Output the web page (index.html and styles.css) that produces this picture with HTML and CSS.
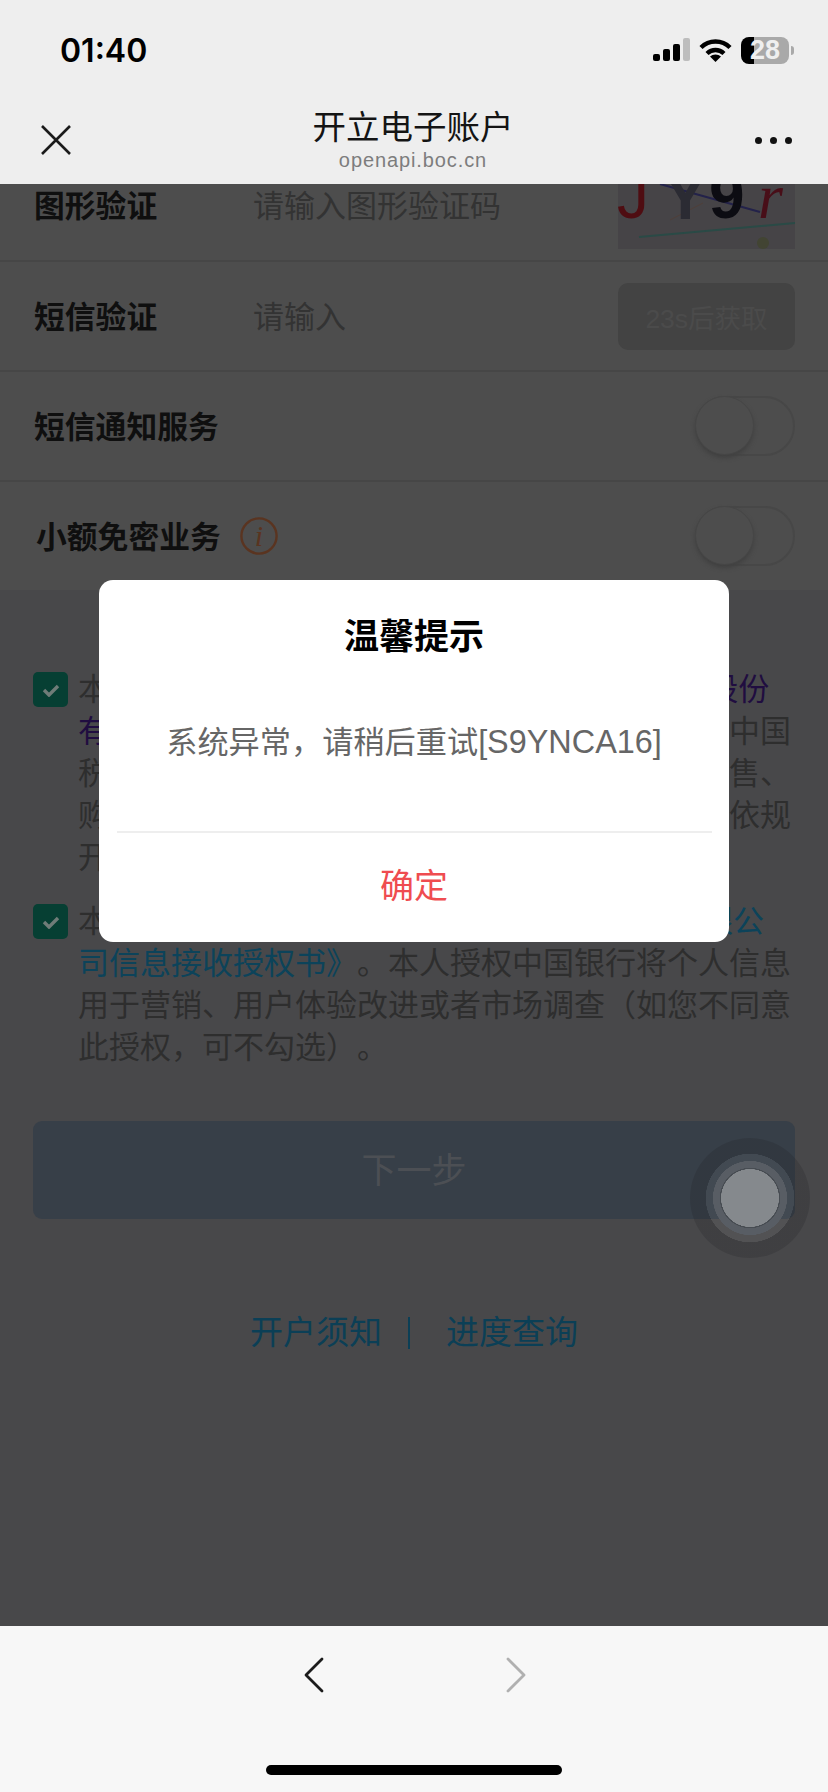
FILE: index.html
```html
<!DOCTYPE html>
<html lang="zh-CN">
<head>
<meta charset="utf-8">
<title>开立电子账户</title>
<link rel="stylesheet" href="styles.css">
</head>
<body>
<div class="app">
  <header class="topbar">
    <div class="status">
      <span class="time">01:40</span>
      <div class="status-icons">
        <svg class="signal" width="37" height="24" viewBox="0 0 37 24"><rect x="0" y="16" width="7" height="7" rx="2"/><rect x="10" y="11" width="7" height="12" rx="2"/><rect x="20" y="6" width="7" height="17" rx="2"/><rect x="30" y="0" width="7" height="23" rx="2" fill="#bdbdbd"/></svg>
        <svg class="wifi" width="33" height="24" viewBox="0 0 33 24"><path d="M2 9.5C10 1.5 23 1.5 31 9.5" fill="none" stroke="#000" stroke-width="4.4"/><path d="M8 15.5C13 10.8 20 10.8 25 15.5" fill="none" stroke="#000" stroke-width="4.4"/><path d="M16.5 24L11 18.6C14 15.9 19 15.9 22 18.6Z"/></svg>
        <div class="battery"><span class="battery-num">28</span></div>
        <span class="battery-nub"></span>
      </div>
    </div>
    <nav class="nav">
      <svg class="close" width="30" height="30" viewBox="0 0 30 30"><path d="M1 1L29 29M29 1L1 29" fill="none" stroke="#1a1a1a" stroke-width="2.6"/></svg>
      <div class="nav-title">
        <div class="nav-name">开立电子账户</div>
        <div class="nav-url">openapi.boc.cn</div>
      </div>
      <div class="dots"><span></span><span></span><span></span></div>
    </nav>
  </header>

  <main class="content">
    <section class="form">
      <div class="row row-first">
        <span class="label">图形验证</span>
        <span class="placeholder">请输入图形验证码</span>
        <svg class="captcha" width="177" height="88" viewBox="0 0 177 88">
          <rect width="177" height="88" fill="#464447"/>
          <path d="M42 23L142 51" stroke="#23224a" stroke-width="2" fill="none"/>
          <path d="M52 59L85 42" stroke="#4f3f39" stroke-width="1" fill="none"/>
          <path d="M21 76L177 62" stroke="#2a4a46" stroke-width="2" fill="none"/>
          <circle cx="145" cy="82" r="6" fill="#424433"/>
          <text class="cap-j" x="-1" y="57">J</text>
          <text class="cap-y" x="46" y="58">Y</text>
          <text class="cap-9" x="91" y="57">9</text>
          <text class="cap-r" x="140" y="57">r</text>
        </svg>
      </div>
      <div class="row">
        <span class="label">短信验证</span>
        <span class="placeholder">请输入</span>
        <span class="sms-btn">23s后获取</span>
      </div>
      <div class="row">
        <span class="label">短信通知服务</span>
        <span class="toggle"><span class="knob"></span></span>
      </div>
      <div class="row row-last">
        <span class="label label-auto">小额免密业务</span>
        <svg class="info" width="38" height="38" viewBox="0 0 38 38"><circle cx="19" cy="19" r="17.6" fill="none" stroke="#5a3420" stroke-width="2.4"/><text class="info-i" x="19" y="29">i</text></svg>
        <span class="toggle"><span class="knob"></span></span>
      </div>
    </section>

    <section class="agreements">
      <div class="agree">
        <span class="check"><svg width="18" height="14" viewBox="0 0 18 14"><path d="M2 7L7 12L16 3" fill="none" stroke="#6f7c78" stroke-width="3.4"/></svg></span>
        <p class="agree-text">本人已阅读同意《账户服务协议》《&#8201;<span class="visited">中国银行股份<br>有限公司</span>电子账户章程及相关服务条款，并知晓中国<br>税收居民身份声明，并同意办理账户开立基金销售、<br>购买理财产品等相关业务，确认所填信息真实并依规<br>开立账户。</p>
      </div>
      <div class="agree">
        <span class="check"><svg width="18" height="14" viewBox="0 0 18 14"><path d="M2 7L7 12L16 3" fill="none" stroke="#6f7c78" stroke-width="3.4"/></svg></span>
        <p class="agree-text">本人已阅读并同意签署<span class="link">《致中国银行及其子中银公<br>司信息接收授权书》</span>。本人授权中国银行将个人信息<br>用于营销、用户体验改进或者市场调查（如您不同意<br>此授权，可不勾选）。</p>
      </div>
    </section>

    <div class="next">下一步</div>

    <div class="links">
      <span>开户须知</span>
      <i class="sep"></i>
      <span>进度查询</span>
    </div>

    <div class="ball"></div>

    <div class="modal">
      <h2 class="modal-title">温馨提示</h2>
      <p class="modal-msg">系统异常，请稍后重试<span class="modal-code">[S9YNCA16]</span></p>
      <div class="modal-line"></div>
      <div class="modal-ok">确定</div>
    </div>
  </main>

  <footer class="bottom">
    <div class="arrows">
      <svg width="20" height="36" viewBox="0 0 20 36"><path d="M18 2L2 18L18 34" fill="none" stroke="#1c1c1c" stroke-width="2.8" stroke-linecap="round" stroke-linejoin="round"/></svg>
      <svg width="20" height="36" viewBox="0 0 20 36"><path d="M2 2L18 18L2 34" fill="none" stroke="#b0b0b0" stroke-width="2.8" stroke-linecap="round" stroke-linejoin="round"/></svg>
    </div>
    <div class="home"></div>
  </footer>
</div>
</body>
</html>
```

FILE: styles.css
```css
* { box-sizing: border-box; }
html, body { margin: 0; padding: 0; }
body {
  font-family: "Liberation Sans", "Noto Sans CJK SC", sans-serif;
  background: #48484a;
  text-spacing-trim: space-all;
}
.app {
  width: 828px;
  height: 1792px;
  display: flex;
  flex-direction: column;
  overflow: hidden;
}

/* top */
.topbar {
  height: 184px;
  flex: none;
  background: #eeeeee;
  position: relative;
  z-index: 2;
}
.status {
  height: 100px;
  display: flex;
  align-items: center;
  justify-content: space-between;
  padding: 0 34px 0 60px;
}
.time {
  font-family: Inter, "Liberation Sans", sans-serif;
  font-size: 32px;
  font-weight: 600;
  color: #000;
}
.status-icons {
  display: flex;
  align-items: center;
}
.signal { margin-right: 8px; }
.wifi { margin-right: 9px; margin-left: 1px; }
.battery {
  width: 48px;
  height: 27px;
  border-radius: 8px;
  background: linear-gradient(to right, #000 13px, #a9a9a9 13px);
  display: flex;
  align-items: center;
  justify-content: center;
}
.battery-num {
  font-size: 27px;
  font-weight: 700;
  color: #efefef;
  line-height: 27px;
}
.battery-nub {
  width: 3px;
  height: 9px;
  margin-left: 2px;
  border-radius: 0 3px 3px 0;
  background: #a9a9a9;
}
.nav {
  height: 84px;
  padding: 0 36px 4px 41px;
  display: flex;
  align-items: center;
  justify-content: space-between;
}
.nav-title { text-align: center; }
.nav-name {
  font-size: 33.5px;
  line-height: 40px;
  color: #141414;
}
.nav-url {
  font-size: 20px;
  line-height: 24px;
  color: #7d7d7d;
  letter-spacing: 0.9px;
}
.dots {
  display: flex;
  gap: 8px;
}
.dots span {
  width: 7px;
  height: 7px;
  border-radius: 50%;
  background: #111;
}

/* content */
.content {
  flex: 1;
  position: relative;
  overflow: hidden;
  background: #48484a;
}
.form {
  margin-top: -34px;
  background: #4d4d4d;
}
.row {
  height: 110px;
  padding: 0 33px 0 34px;
  display: flex;
  align-items: center;
  border-bottom: 2px solid #464646;
  font-size: 31px;
}
.row-first { height: 112px; }
.row-last { height: 108px; border-bottom: 0; }
.label {
  font-weight: 700;
  font-size: 30.8px;
  color: #0f0f0f;
  width: 219px;
  flex: none;
  padding-bottom: 4px;
}
.label-auto { width: auto; padding-left: 2px; }
.placeholder {
  color: #333333;
  flex: 1;
  padding-bottom: 4px;
}
.captcha { flex: none; }
.captcha text { font-size: 64px; }
.captcha .cap-j { fill: #4f0d12; font-family: "Liberation Sans", sans-serif; }
.captcha .cap-y { fill: #2b2b33; font-family: "Liberation Sans", sans-serif; font-weight: 700; }
.captcha .cap-9 { fill: #0c0c12; font-family: "Liberation Sans", sans-serif; font-weight: 700; }
.captcha .cap-r { fill: #480e18; font-family: "Liberation Serif", serif; font-style: italic; }
.sms-btn {
  width: 177px;
  height: 67px;
  border-radius: 10px;
  background: #434343;
  color: #4b4b4b;
  font-size: 26.5px;
  display: flex;
  align-items: center;
  justify-content: center;
  flex: none;
}
.toggle {
  margin-left: auto;
  width: 100px;
  height: 60px;
  border: 2px solid #474747;
  border-radius: 30px;
  background: #4d4d4d;
  position: relative;
  flex: none;
}
.knob {
  position: absolute;
  left: -2px;
  top: -2px;
  width: 59px;
  height: 59px;
  border-radius: 50%;
  background: #4d4d4d;
  border: 1px solid #464646;
  box-shadow: 0 3px 4px #414141;
}
.info { margin-left: 19px; flex: none; }
.info-i {
  font-family: "Liberation Serif", serif;
  font-style: italic;
  font-size: 30px;
  fill: #5a3420;
  text-anchor: middle;
}

.agreements {
  margin-top: 79px;
  padding: 0 33px;
  display: flex;
  flex-direction: column;
  gap: 22px;
}
.agree {
  display: flex;
  align-items: flex-start;
}
.check {
  width: 35px;
  height: 35px;
  margin-top: 3px;
  margin-right: 10px;
  border-radius: 5px;
  background: #063f33;
  display: flex;
  align-items: center;
  justify-content: center;
  flex: none;
}
.agree-text {
  margin: 0;
  font-size: 31px;
  line-height: 42px;
  color: #2e2e2e;
  white-space: nowrap;
}
.visited { color: #200d40; margin-left: 3px; }
.link { color: #0c435a; margin-left: 4px; }
.next {
  margin: 52px 33px 0;
  height: 98px;
  padding-bottom: 6px;
  border-radius: 9px;
  background: #373f48;
  color: #4c4f54;
  font-size: 35px;
  display: flex;
  align-items: center;
  justify-content: center;
}
.links {
  margin-top: 90px;
  display: flex;
  justify-content: center;
  align-items: center;
  font-size: 33px;
  line-height: 48px;
  color: #0b3f56;
}
.sep {
  width: 2px;
  height: 32px;
  background: #0b3f56;
  margin: 0 36px 0 26px;
}
.ball {
  position: absolute;
  left: 690px;
  top: 954px;
  width: 120px;
  height: 120px;
  border-radius: 50%;
  background: radial-gradient(circle closest-side,
    #85898d 0, #85898d 48%, #474c52 48.5%, #474c52 50%,
    #585d64 50.5%, #585d64 61.5%, rgba(255, 255, 255, .055) 62%, rgba(255, 255, 255, .055) 73.5%,
    rgba(28, 28, 32, .2) 74%, rgba(28, 28, 32, .2) 100%);
}

/* modal */
.modal {
  position: absolute;
  left: 99px;
  top: 396px;
  width: 630px;
  height: 362px;
  background: #fff;
  border-radius: 14px;
  padding-top: 33px;
  text-align: center;
}
.modal-title {
  margin: 0;
  font-size: 35px;
  line-height: 48px;
  font-weight: 700;
  color: #000;
}
.modal-msg {
  margin: 59px 0 0;
  font-size: 31.2px;
  line-height: 44px;
  color: #666;
}
.modal-code { font-size: 32.4px; }
.modal-line {
  height: 2px;
  margin: 66px 17px 0 18px;
  background: #eeeeee;
}
.modal-ok {
  height: 107px;
  padding-bottom: 7px;
  display: flex;
  align-items: center;
  justify-content: center;
  font-size: 34px;
  color: #ef4c50;
}

/* bottom */
.bottom {
  height: 166px;
  flex: none;
  background: #f7f7f7;
  position: relative;
}
.arrows {
  padding: 31px 302px 0 304px;
  display: flex;
  justify-content: space-between;
}
.home {
  width: 296px;
  height: 10px;
  border-radius: 5px;
  background: #000;
  margin: 72px auto 0;
}
```
